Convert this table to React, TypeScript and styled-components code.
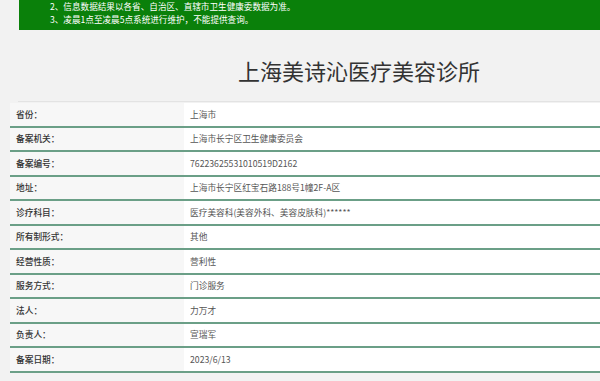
import styled, { createGlobalStyle } from "styled-components";

const GlobalStyle = createGlobalStyle`
  html, body {
    margin: 0;
    padding: 0;
    background: #f2f2f2;
    overflow: hidden;
  }
  body {
    font-family: "Noto Sans CJK SC", "Noto Sans", sans-serif;
    color: #333;
  }
`;

const rows: [string, string][] = [
  ["省份：", "上海市"],
  ["备案机关：", "上海市长宁区卫生健康委员会"],
  ["备案编号：", "76223625531010519D2162"],
  ["地址：", "上海市长宁区红宝石路188号1幢2F-A区"],
  ["诊疗科目：", "医疗美容科(美容外科、美容皮肤科)******"],
  ["所有制形式：", "其他"],
  ["经营性质：", "营利性"],
  ["服务方式：", "门诊服务"],
  ["法人：", "力万才"],
  ["负责人：", "宣瑞军"],
  ["备案日期：", "2023/6/13"],
];

function App() {
  return (
    <Page>
      <GlobalStyle />
      <Notice>
        <div>2、信息数据结果以各省、自治区、直辖市卫生健康委数据为准。</div>
        <div>3、凌晨1点至凌晨5点系统进行维护，不能提供查询。</div>
      </Notice>
      <Header>
        <Title>上海美诗沁医疗美容诊所</Title>
      </Header>
      <InfoTable>
        {rows.map(([label, value]) => (
          <Row key={label}>
            <Label>{label}</Label>
            <Value>{value}</Value>
          </Row>
        ))}
      </InfoTable>
    </Page>
  );
}

export default App;

const Page = styled.div`
  width: 100%;
  overflow: hidden;
`;

const Notice = styled.div`
  margin-left: 19px;
  background: #0a800a;
  color: #fff;
  font-size: 8.6px;
  line-height: 13px;
  padding: 0 0 4px 31px;
  white-space: nowrap;
`;

const Header = styled.div`
  margin-left: 18px;
  height: 72px;
  border-bottom: 1px solid #e3e3e3;
  display: flex;
  justify-content: center;
  align-items: flex-start;
  padding-left: 100px;
  box-sizing: border-box;
`;

const Title = styled.h1`
  margin: 26px 0 0;
  font-size: 22px;
  line-height: 28px;
  font-weight: 400;
  color: #333;
  white-space: nowrap;
`;

const InfoTable = styled.div`
  margin-left: 10px;
  padding-top: 1px;
`;

const Row = styled.div`
  display: grid;
  grid-template-columns: 174px 1fr;
  height: 22.5px;
  border-bottom: 2px solid #6b9f87;
  font-size: 8.7px;
`;

const Label = styled.div`
  background: #f7f7f7;
  padding-left: 6px;
  display: flex;
  align-items: center;
  color: #333;
  font-weight: 500;
`;

const Value = styled.div`
  background: #fff;
  padding-left: 6px;
  display: flex;
  align-items: center;
  color: #555;
  white-space: nowrap;
`;
